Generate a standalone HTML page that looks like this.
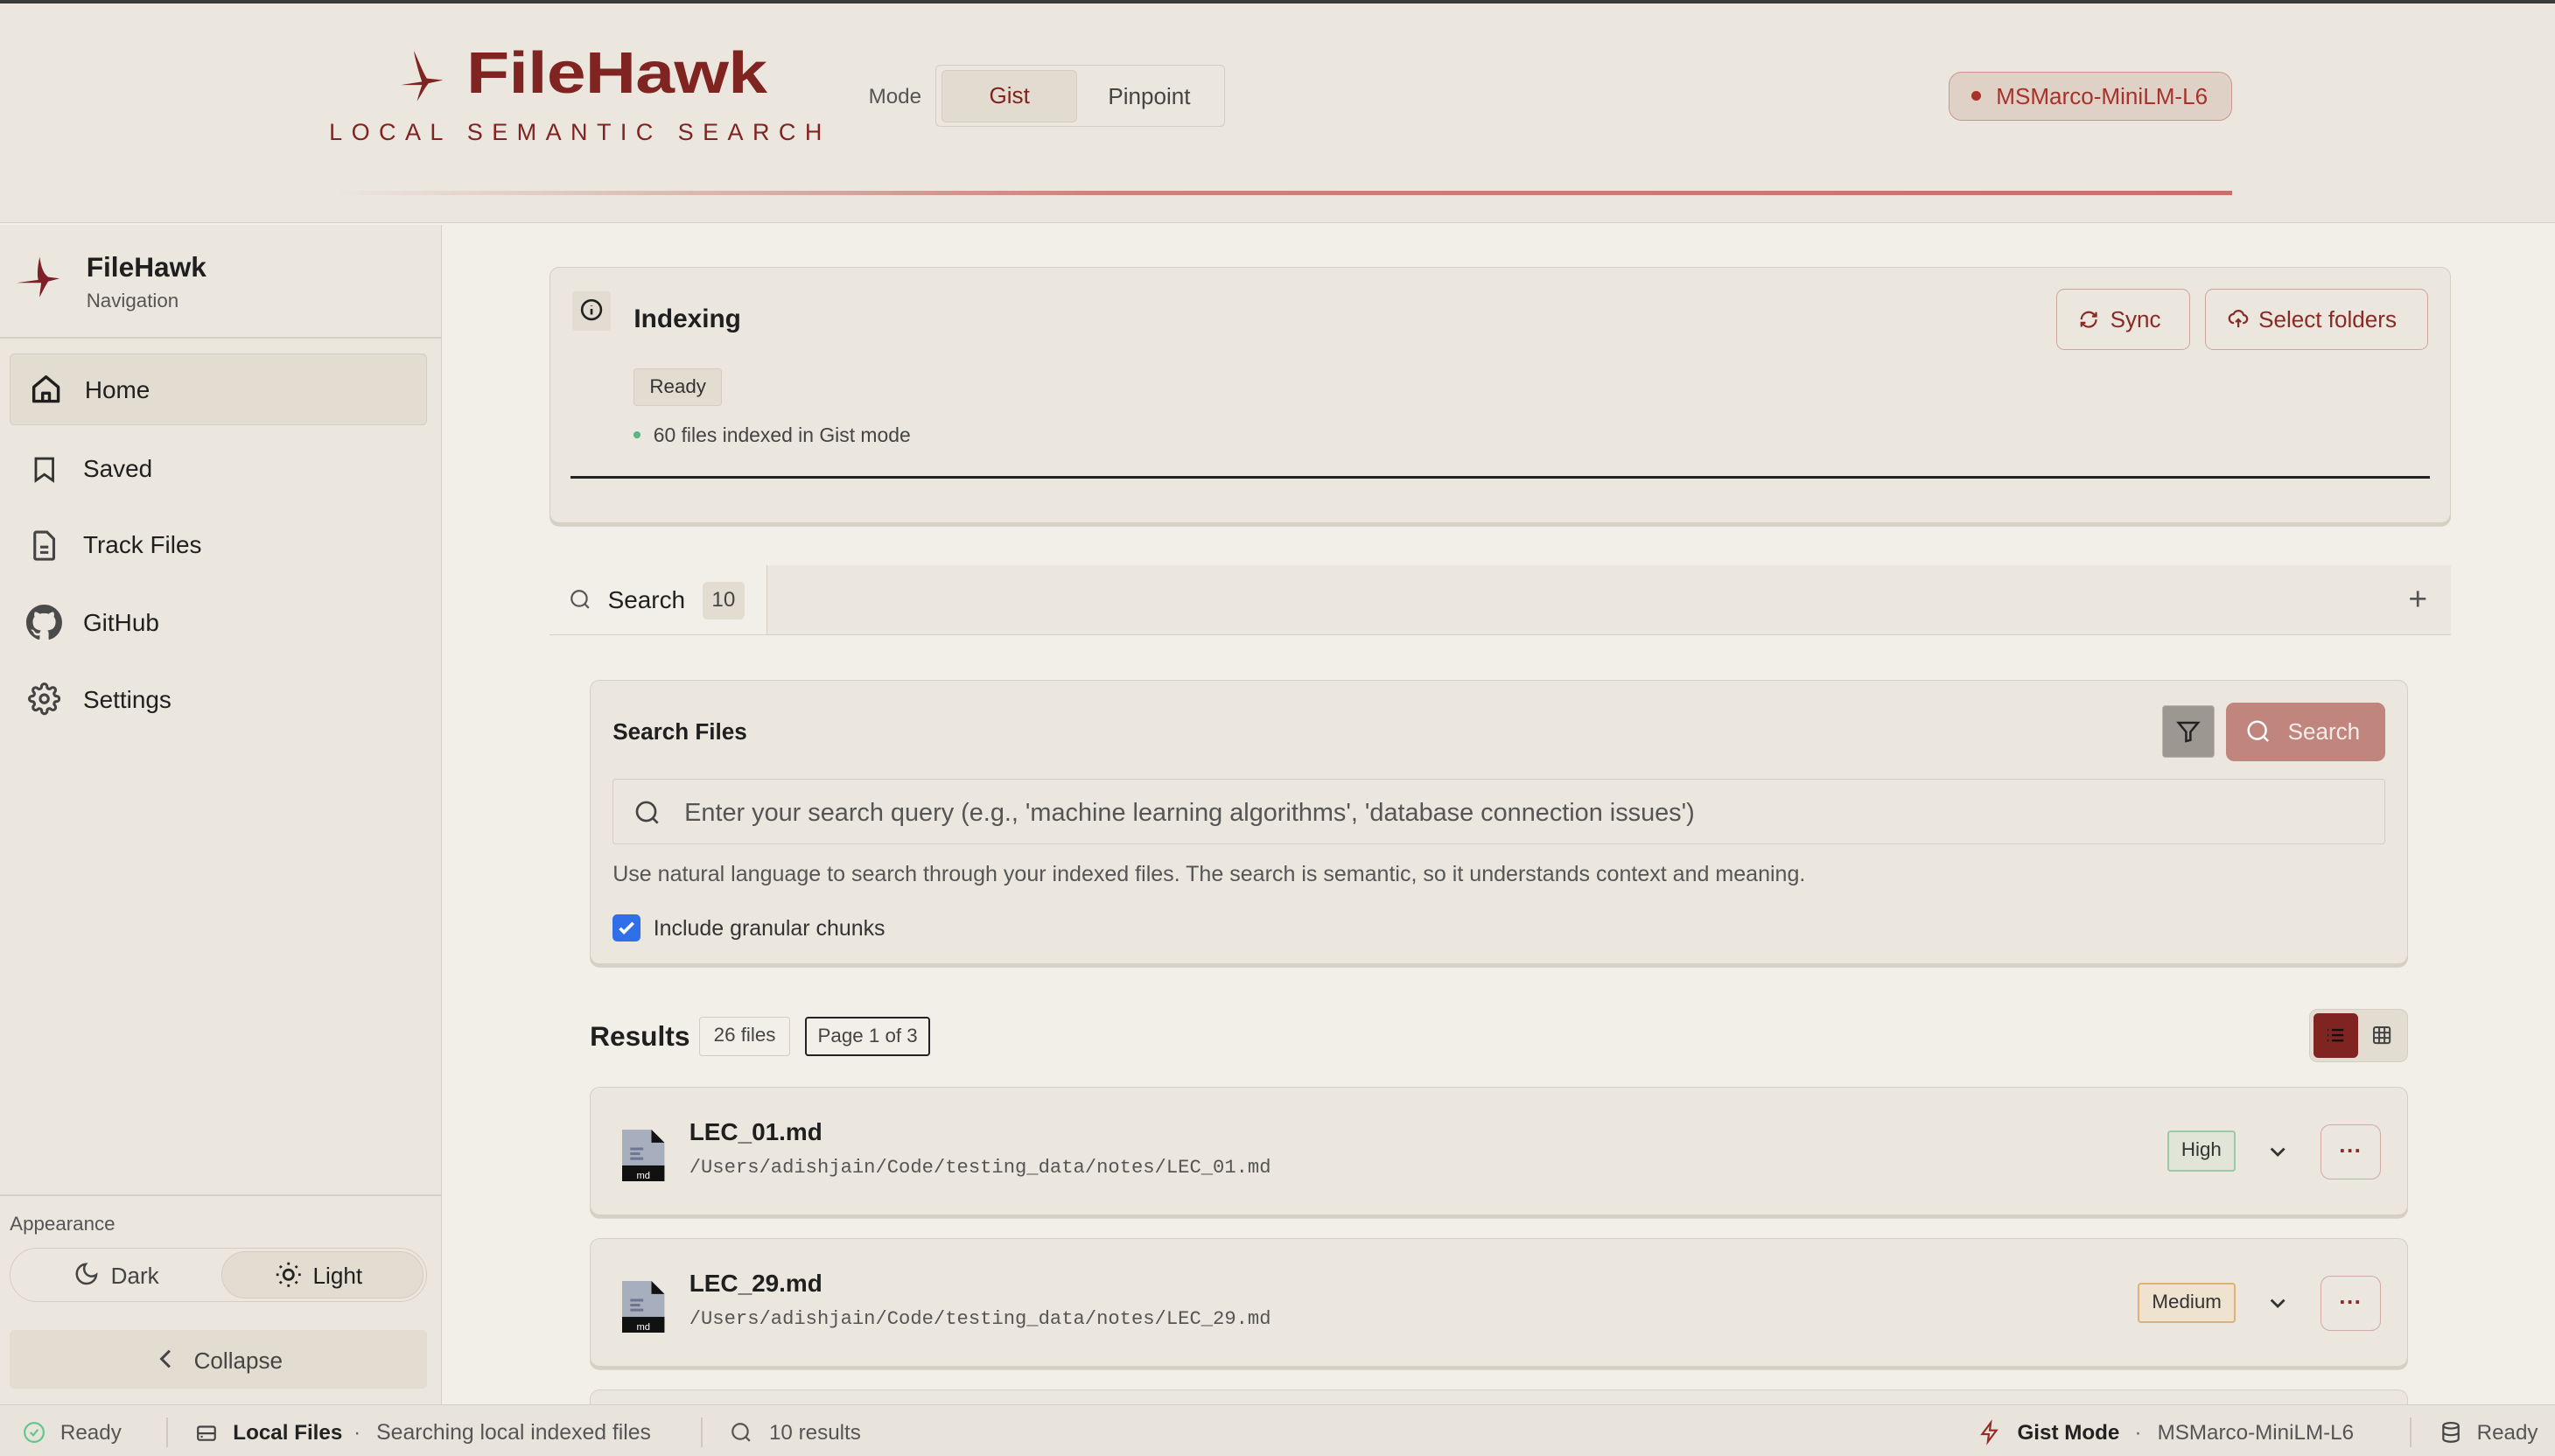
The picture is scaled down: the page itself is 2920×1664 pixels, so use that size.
<!DOCTYPE html>
<html><head><meta charset="utf-8">
<style>
*{box-sizing:border-box;margin:0;padding:0}
html,body{width:2920px;height:1664px;overflow:hidden;background:#f2efe8}
#z{zoom:1.86225;width:1568px;height:894px;position:relative;font-family:"Liberation Sans",sans-serif;color:#1f1f1f;background:#f2efe8}
.a{position:absolute}
.t{white-space:nowrap}
.card{background:#ebe6de;border:1px solid #d6cfc4;border-radius:6px;box-shadow:0 2px 0 #d6cfc4}
svg{display:block}
</style></head><body><div id="z">
<div class="a" style="left:0;top:0;width:1568px;height:2px;background:#3a3a38"></div>
<div class="a" style="left:0;top:2px;width:1568px;height:135px;background:#ebe6de;border-bottom:1px solid #d8d1c6"></div>
<svg class="a" style="left:246px;top:31px" width="30" height="32" viewBox="0 0 30 32"><path d="M8 0 C11 6 13 12 16 17 L26 18 L17 20 C14 24 12 28 10 31 C11 27 12 24 13 21 L0 21 L13 19 C11 13 9 6 8 0Z" fill="#7f2420"/></svg>
<div class="a t" style="left:286px;top:24px;font-size:36px;font-weight:700;color:#7f2420;transform:scaleX(1.2);transform-origin:left top;letter-spacing:-0.3px">FileHawk</div>
<div class="a t" style="left:202px;top:73px;font-size:14.5px;color:#7f2420;letter-spacing:5.6px">LOCAL SEMANTIC SEARCH</div>
<div class="a t" style="left:533px;top:52px;font-size:13px;color:#555">Mode</div>
<div class="a" style="left:574px;top:40px;width:178px;height:38px;border:1px solid #d4cdc2;border-radius:3px;background:#ebe6de"></div>
<div class="a" style="left:578px;top:43px;width:83px;height:32px;background:#e2dcd0;border:1px solid #d4cdc2;border-radius:3px;color:#7f2420;font-size:14px;text-align:center;line-height:31px">Gist</div>
<div class="a t" style="left:680px;top:51px;font-size:14px;color:#444">Pinpoint</div>
<div class="a" style="left:1196px;top:44px;width:174px;height:30px;background:#e0d1c7;border:1px solid #c7988e;border-radius:8px"></div>
<div class="a" style="left:1210px;top:56px;width:6px;height:6px;border-radius:50%;background:#a8322a"></div>
<div class="a t" style="left:1225px;top:51px;font-size:14px;color:#a8322a">MSMarco-MiniLM-L6</div>
<div class="a" style="left:205px;top:117px;width:1165px;height:3px;background:linear-gradient(90deg,rgba(200,120,110,0),#c8857a 40%,#c87068)"></div>

<div class="a" style="left:0;top:138px;width:271px;height:724px;background:#ebe6de;border-right:1px solid #d8d1c6"></div>
<svg class="a" style="left:10px;top:157px" width="30" height="30" viewBox="0 0 34 32"><path d="M16 0 C17 6 18 11 22 14 L30 15 L22 17 C20 20 18 24 16 28 C16 24 17 21 17 18 L0 18 L15 16 C14 11 15 5 16 0Z" fill="#7f1f28"/></svg>
<div class="a t" style="left:53px;top:154px;font-size:17px;font-weight:700">FileHawk</div>
<div class="a t" style="left:53px;top:178px;font-size:12px;color:#555">Navigation</div>
<div class="a" style="left:0;top:207px;width:271px;height:1px;background:#d6cfc4"></div>
<div class="a" style="left:6px;top:217px;width:256px;height:44px;background:#e3ddd1;border:1px solid #d4cdc2;border-radius:3px"></div>
<svg class="a" style="left:18px;top:229px" width="20" height="20" viewBox="0 0 24 24" fill="none" stroke="#1f1f1f" stroke-width="2.2" stroke-linejoin="round"><path d="M3 10.5L12 3l9 7.5V21H3z"/><path d="M9.5 21v-6h5v6"/></svg>
<div class="a t" style="left:52px;top:231px;font-size:15px">Home</div>
<svg class="a" style="left:18px;top:278px" width="18" height="20" viewBox="0 0 24 24" fill="none" stroke="#333" stroke-width="2"><path d="M5 3h14v18l-7-5-7 5z"/></svg>
<div class="a t" style="left:51px;top:279px;font-size:15px">Saved</div>
<svg class="a" style="left:17px;top:325px" width="20" height="20" viewBox="0 0 24 24" fill="none" stroke="#444" stroke-width="2"><path d="M6 2h8l5 5v14a1 1 0 01-1 1H6a1 1 0 01-1-1V3a1 1 0 011-1z"/><path d="M9 13h6M9 17h6"/></svg>
<div class="a t" style="left:51px;top:326px;font-size:15px">Track Files</div>
<svg class="a" style="left:16px;top:371px" width="22" height="22" viewBox="0 0 16 16"><path fill="#4a4a4a" d="M8 0C3.58 0 0 3.580 0 8c0 3.54 2.29 6.53 5.470 7.59.4.07.55-.17.55-.38 0-.19-.01-.82-.01-1.49-2.01.37-2.53-.49-2.69-.94-.09-.23-.48-.94-.82-1.13-.28-.15-.68-.52-.01-.53.63-.01 1.08.58 1.23.82.72 1.21 1.87.87 2.33.66.07-.52.28-.87.51-1.07-1.78-.2-3.64-.89-3.64-3.95 0-.87.31-1.59.82-2.15-.08-.2-.36-1.02.08-2.12 0 0 .67-.21 2.2.82.64-.18 1.32-.27 2-.27.68 0 1.36.09 2 .27 1.53-1.04 2.2-.82 2.2-.82.44 1.1.16 1.92.08 2.12.51.56.82 1.27.82 2.15 0 3.07-1.87 3.75-3.65 3.95.29.25.54.73.54 1.48 0 1.07-.01 1.930-.01 2.2 0 .21.15.46.55.38A8.013 8.013 0 0016 8c0-4.42-3.58-8-8-8z"/></svg>
<div class="a t" style="left:51px;top:374px;font-size:15px">GitHub</div>
<svg class="a" style="left:17px;top:419px" width="20" height="20" viewBox="0 0 24 24" fill="none" stroke="#444" stroke-width="2"><circle cx="12" cy="12" r="3"/><path d="M19.4 15a1.65 1.65 0 00.33 1.82l.06.06a2 2 0 11-2.83 2.83l-.06-.06a1.65 1.65 0 00-1.82-.33 1.65 1.65 0 00-1 1.51V21a2 2 0 11-4 0v-.09A1.65 1.65 0 009 19.4a1.65 1.65 0 00-1.82.33l-.06.06a2 2 0 11-2.830-2.83l.06-.06A1.65 1.65 0 004.6 15a1.65 1.65 0 00-1.51-1H3a2 2 0 110-4h.09A1.650 1.65 0 004.6 9a1.65 1.65 0 00-.33-1.82l-.06-.06a2 2 0 112.83-2.83l.06.06A1.65 1.65 0 009 4.6a1.65 1.65 0 001-1.51V3a2 2 0 114 0v.09a1.65 1.65 0 001 1.51 1.65 1.65 0 001.82-.33l.06-.06a2 2 0 112.83 2.83l-.06.06A1.65 1.65 0 0019.4 9a1.65 1.65 0 001.51 1H21a2 2 0 110 4h-.09a1.65 1.65 0 00-1.51 1z"/></svg>
<div class="a t" style="left:51px;top:421px;font-size:15px">Settings</div>
<div class="a" style="left:0;top:733px;width:271px;height:1px;background:#d6cfc4"></div>
<div class="a t" style="left:6px;top:744px;font-size:12px;color:#555">Appearance</div>
<div class="a" style="left:6px;top:766px;width:256px;height:33px;border:1px solid #d4cdc2;border-radius:17px;background:#ebe6de"></div>
<div class="a" style="left:136px;top:768px;width:124px;height:29px;border:1px solid #d4cdc2;border-radius:15px;background:#e3ddd1"></div>
<svg class="a" style="left:45px;top:774px" width="16" height="16" viewBox="0 0 24 24" fill="none" stroke="#444" stroke-width="2"><path d="M21 12.8A9 9 0 1111.2 3a7 7 0 009.8 9.8z"/></svg>
<div class="a t" style="left:68px;top:775px;font-size:14px;color:#444">Dark</div>
<svg class="a" style="left:168px;top:773px" width="18" height="18" viewBox="0 0 24 24" fill="none" stroke="#222" stroke-width="2"><circle cx="12" cy="12" r="4"/><path d="M12 2v2M12 20v2M4.9 4.9l1.4 1.4M17.7 17.7l1.4 1.4M2 12h2M20 12h2M4.9 19.1l1.4-1.4M17.7 6.3l1.4-1.4"/></svg>
<div class="a t" style="left:192px;top:775px;font-size:14px">Light</div>
<div class="a" style="left:6px;top:816px;width:256px;height:36px;background:#e3ddd1;border-radius:3px"></div>
<svg class="a" style="left:96px;top:827px" width="12" height="14" viewBox="0 0 12 14" fill="none" stroke="#444" stroke-width="1.6"><path d="M8 2L3 7l5 5"/></svg>
<div class="a t" style="left:119px;top:827px;font-size:14px;color:#444">Collapse</div>

<div class="a card" style="left:337px;top:164px;width:1167px;height:157px"></div>
<div class="a" style="left:351px;top:179px;width:24px;height:24px;background:#e3ddd1;border-radius:2px"></div>
<svg class="a" style="left:356px;top:183px" width="14" height="14" viewBox="0 0 24 24" fill="none" stroke="#222" stroke-width="2.4"><circle cx="12" cy="12" r="10"/><path d="M12 11v6M12 7.5v.5"/></svg>
<div class="a t" style="left:389px;top:187px;font-size:16px;font-weight:600">Indexing</div>
<div class="a" style="left:1262px;top:177px;width:82px;height:38px;border:1px solid #c9a79f;border-radius:5px"></div>
<svg class="a" style="left:1276px;top:190px" width="12" height="12" viewBox="0 0 24 24" fill="none" stroke="#8a2a24" stroke-width="2.4"><path d="M3 12a9 9 0 0115-6.7L21 8M21 3v5h-5M21 12a9 9 0 01-15 6.7L3 16M3 21v-5h5"/></svg>
<div class="a t" style="left:1295px;top:188px;font-size:14px;color:#8a2a24">Sync</div>
<div class="a" style="left:1353px;top:177px;width:137px;height:38px;border:1px solid #c9a79f;border-radius:5px"></div>
<svg class="a" style="left:1367px;top:189px" width="13" height="14" viewBox="0 0 24 24" fill="none" stroke="#8a2a24" stroke-width="2.2"><path d="M7 16a5 5 0 01-.5-10A6 6 0 0118 7a4 4 0 01-1 9M12 12v9M9 15l3-3 3 3"/></svg>
<div class="a t" style="left:1386px;top:188px;font-size:14px;color:#8a2a24">Select folders</div>
<div class="a" style="left:389px;top:226px;width:54px;height:23px;background:#e3ddd1;border:1px solid #d4cdc2;border-radius:2px;font-size:12px;text-align:center;line-height:21px;color:#333">Ready</div>
<div class="a" style="left:389px;top:265px;width:4px;height:4px;border-radius:50%;background:#5bb585"></div>
<div class="a t" style="left:401px;top:260px;font-size:12.3px;color:#444">60 files indexed in Gist mode</div>
<div class="a" style="left:350px;top:292px;width:1141px;height:2px;background:#222"></div>

<div class="a" style="left:337px;top:347px;width:1167px;height:43px;background:#ebe6de;border-bottom:1px solid #d6cfc4"></div>
<div class="a" style="left:337px;top:347px;width:134px;height:43px;background:#f2efe8;border-right:1px solid #d6cfc4;border-bottom:1px solid #d6cfc4"></div>
<svg class="a" style="left:349px;top:361px" width="14" height="14" viewBox="0 0 24 24" fill="none" stroke="#555" stroke-width="2"><circle cx="11" cy="11" r="8"/><path d="M21 21l-4.3-4.3"/></svg>
<div class="a t" style="left:373px;top:360px;font-size:15px">Search</div>
<div class="a" style="left:431px;top:357px;width:26px;height:23px;background:#e3ddd1;border-radius:3px;font-size:13px;text-align:center;line-height:23px;color:#444">10</div>
<div class="a t" style="left:1478px;top:356px;font-size:20px;color:#555">+</div>

<div class="a card" style="left:362px;top:417px;width:1116px;height:175px"></div>
<div class="a t" style="left:376px;top:441px;font-size:14px;font-weight:700">Search Files</div>
<div class="a" style="left:1327px;top:433px;width:32px;height:32px;background:#9c9891;border:1px solid #bbb5ab;border-radius:2px"></div>
<svg class="a" style="left:1335px;top:441px" width="16" height="16" viewBox="0 0 24 24" fill="none" stroke="#222" stroke-width="2"><path d="M3 4h18l-7 8.5V20l-4 1v-8.5z"/></svg>
<div class="a" style="left:1366px;top:431px;width:98px;height:36px;background:#c0857c;border-radius:5px"></div>
<svg class="a" style="left:1378px;top:441px" width="16" height="16" viewBox="0 0 24 24" fill="none" stroke="#fff" stroke-width="2"><circle cx="11" cy="11" r="8"/><path d="M21 21l-4.3-4.3"/></svg>
<div class="a t" style="left:1404px;top:441px;font-size:14px;color:#f7ece9">Search</div>
<div class="a" style="left:376px;top:478px;width:1088px;height:40px;border:1px solid #d4cdc2;border-radius:2px;background:#ebe6de"></div>
<svg class="a" style="left:389px;top:490px" width="17" height="17" viewBox="0 0 24 24" fill="none" stroke="#444" stroke-width="2"><circle cx="11" cy="11" r="8"/><path d="M21 21l-4.3-4.3"/></svg>
<div class="a t" style="left:420px;top:490px;font-size:15.5px;color:#555">Enter your search query (e.g., 'machine learning algorithms', 'database connection issues')</div>
<div class="a t" style="left:376px;top:529px;font-size:13.45px;color:#555">Use natural language to search through your indexed files. The search is semantic, so it understands context and meaning.</div>
<div class="a" style="left:376px;top:561px;width:17px;height:17px;background:#2f6fe8;border-radius:3px"></div>
<svg class="a" style="left:378px;top:563px" width="13" height="13" viewBox="0 0 16 16" fill="none" stroke="#fff" stroke-width="2.4"><path d="M3 8.5l3 3 7-7"/></svg>
<div class="a t" style="left:401px;top:562px;font-size:13.4px;color:#333">Include granular chunks</div>

<div class="a t" style="left:362px;top:626px;font-size:17px;font-weight:700">Results</div>
<div class="a" style="left:429px;top:624px;width:56px;height:24px;border:1px solid #d4cdc2;border-radius:2px;font-size:12px;text-align:center;line-height:22px;color:#444">26 files</div>
<div class="a" style="left:494px;top:624px;width:77px;height:24px;border:1.5px solid #222;border-radius:2px;font-size:12px;text-align:center;line-height:21px;color:#444">Page 1 of 3</div>
<div class="a" style="left:1417px;top:619px;width:61px;height:33px;background:#e3ddd1;border:1px solid #d4cdc2;border-radius:5px"></div>
<div class="a" style="left:1420px;top:622px;width:27px;height:27px;background:#7f2420;border-radius:3px"></div>
<svg class="a" style="left:1427px;top:629px" width="13" height="13" viewBox="0 0 24 24" fill="none" stroke="#111" stroke-width="2.4"><path d="M8 6h13M8 12h13M8 18h13M3 6h1M3 12h1M3 18h1"/></svg>
<svg class="a" style="left:1455px;top:629px" width="13" height="13" viewBox="0 0 24 24" fill="none" stroke="#444" stroke-width="2"><rect x="3" y="3" width="18" height="18" rx="2"/><path d="M3 9h18M3 15h18M9 3v18M15 3v18"/></svg>

<div class="a card" style="left:362px;top:667px;width:1116px;height:79px"></div>
<div class="a card" style="left:362px;top:760px;width:1116px;height:79px"></div>
<div class="a card" style="left:362px;top:853px;width:1116px;height:40px"></div>

<svg class="a" style="left:382px;top:693px" width="26" height="32" viewBox="0 0 26 32"><path d="M0 0h18l8 8v24H0z" fill="#a7afbf"/><path d="M18 0l8 8h-8z" fill="#111"/><rect x="0" y="22" width="26" height="10" fill="#111"/><rect x="5" y="11" width="8" height="1.6" fill="#6c7690"/><rect x="5" y="14" width="6" height="1.6" fill="#6c7690"/><rect x="5" y="17" width="8" height="1.6" fill="#6c7690"/><text x="13" y="30" font-size="6" fill="#fff" text-anchor="middle" font-family="Liberation Sans">md</text></svg>
<div class="a t" style="left:423px;top:686px;font-size:15px;font-weight:600">LEC_01.md</div>
<div class="a t" style="left:423px;top:710px;font-size:11.9px;color:#555;font-family:'Liberation Mono',monospace">/Users/adishjain/Code/testing_data/notes/LEC_01.md</div>
<div class="a" style="left:1330px;top:694px;width:42px;height:25px;background:#e1e5d8;border:1.5px solid #9bcaa9;border-radius:2px;font-size:12px;text-align:center;line-height:22px;color:#333">High</div>
<svg class="a" style="left:1392px;top:702px" width="12" height="10" viewBox="0 0 12 10" fill="none" stroke="#333" stroke-width="1.5"><path d="M2 3l4 4 4-4"/></svg>
<div class="a" style="left:1424px;top:690px;width:37px;height:34px;border:1px solid #cfaaa4;border-radius:6px;text-align:center;line-height:32px;color:#8a2a24;font-size:14px;font-weight:700">···</div>

<svg class="a" style="left:382px;top:786px" width="26" height="32" viewBox="0 0 26 32"><path d="M0 0h18l8 8v24H0z" fill="#a7afbf"/><path d="M18 0l8 8h-8z" fill="#111"/><rect x="0" y="22" width="26" height="10" fill="#111"/><rect x="5" y="11" width="8" height="1.6" fill="#6c7690"/><rect x="5" y="14" width="6" height="1.6" fill="#6c7690"/><rect x="5" y="17" width="8" height="1.6" fill="#6c7690"/><text x="13" y="30" font-size="6" fill="#fff" text-anchor="middle" font-family="Liberation Sans">md</text></svg>
<div class="a t" style="left:423px;top:779px;font-size:15px;font-weight:600">LEC_29.md</div>
<div class="a t" style="left:423px;top:803px;font-size:11.9px;color:#555;font-family:'Liberation Mono',monospace">/Users/adishjain/Code/testing_data/notes/LEC_29.md</div>
<div class="a" style="left:1312px;top:787px;width:60px;height:25px;background:#efe3cf;border:1.5px solid #e0b07a;border-radius:2px;font-size:12px;text-align:center;line-height:22px;color:#333">Medium</div>
<svg class="a" style="left:1392px;top:795px" width="12" height="10" viewBox="0 0 12 10" fill="none" stroke="#333" stroke-width="1.5"><path d="M2 3l4 4 4-4"/></svg>
<div class="a" style="left:1424px;top:783px;width:37px;height:34px;border:1px solid #cfaaa4;border-radius:6px;text-align:center;line-height:32px;color:#8a2a24;font-size:14px;font-weight:700">···</div>

<div class="a" style="left:0;top:862px;width:1568px;height:32px;background:#e8e3db;border-top:1px solid #d4cdc2"></div>
<svg class="a" style="left:14px;top:872px" width="14" height="14" viewBox="0 0 24 24" fill="none" stroke="#5cc98a" stroke-width="2"><circle cx="12" cy="12" r="10"/><path d="M8 12l3 3 5-6"/></svg>
<div class="a t" style="left:37px;top:872px;font-size:13px;color:#555">Ready</div>
<div class="a" style="left:102px;top:870px;width:1px;height:18px;background:#d0c9be"></div>
<svg class="a" style="left:119px;top:872px" width="15" height="14" viewBox="0 0 24 24" fill="none" stroke="#444" stroke-width="2"><rect x="3" y="6" width="18" height="14" rx="2"/><path d="M3 13h18M6 16.5h2"/></svg>
<div class="a t" style="left:143px;top:872px;font-size:13px;color:#222;font-weight:600">Local Files</div>
<div class="a t" style="left:217px;top:872px;font-size:13px;color:#666">·</div>
<div class="a t" style="left:231px;top:872px;font-size:13.3px;color:#555">Searching local indexed files</div>
<div class="a" style="left:430px;top:870px;width:1px;height:18px;background:#d0c9be"></div>
<svg class="a" style="left:448px;top:872px" width="14" height="14" viewBox="0 0 24 24" fill="none" stroke="#555" stroke-width="2"><circle cx="11" cy="11" r="8"/><path d="M21 21l-4.3-4.3"/></svg>
<div class="a t" style="left:472px;top:872px;font-size:13px;color:#555">10 results</div>
<svg class="a" style="left:1214px;top:871px" width="14" height="16" viewBox="0 0 24 24" fill="none" stroke="#9a2a24" stroke-width="2"><path d="M13 2L4 14h7l-1 8 9-12h-7z"/></svg>
<div class="a t" style="left:1238px;top:872px;font-size:13px;color:#222;font-weight:600">Gist Mode</div>
<div class="a t" style="left:1310px;top:872px;font-size:13px;color:#666">·</div>
<div class="a t" style="left:1324px;top:872px;font-size:13px;color:#555">MSMarco-MiniLM-L6</div>
<div class="a" style="left:1479px;top:870px;width:1px;height:18px;background:#d0c9be"></div>
<svg class="a" style="left:1497px;top:871px" width="14" height="16" viewBox="0 0 24 24" fill="none" stroke="#444" stroke-width="2"><ellipse cx="12" cy="5" rx="8" ry="3"/><path d="M4 5v14c0 1.7 3.6 3 8 3s8-1.3 8-3V5M4 12c0 1.7 3.6 3 8 3s8-1.3 8-3"/></svg>
<div class="a t" style="left:1520px;top:872px;font-size:13px;color:#555">Ready</div>
</div></body></html>
